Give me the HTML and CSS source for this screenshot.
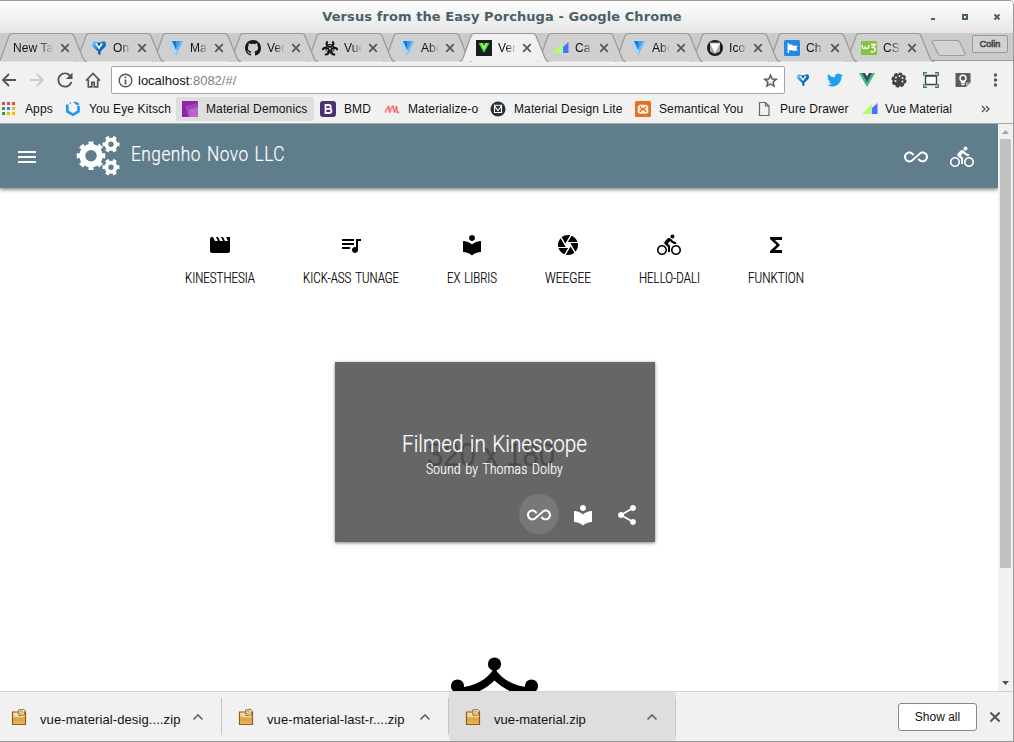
FILE: index.html
```html
<!DOCTYPE html>
<html lang="en">
<head>
<meta charset="utf-8">
<title>Versus from the Easy Porchuga</title>
<link rel="stylesheet" href="styles.css">
</head>
<body>
<svg class="defs" width="0" height="0">
  <defs>
    <linearGradient id="blue" x1="0" y1="0" x2="1" y2="1"><stop offset="0" stop-color="#8fdcff"/><stop offset=".45" stop-color="#1680d8"/><stop offset="1" stop-color="#08306c"/></linearGradient>
    <linearGradient id="box" x1="0" y1="0" x2="0" y2="1"><stop offset="0" stop-color="#f2d49c"/><stop offset=".6" stop-color="#dda347"/><stop offset="1" stop-color="#e8b867"/></linearGradient>
  </defs>
  <symbol id="tab" viewBox="0 0 92 29"><path d="M0 28.5C2 28 2 27 3 25L11 3Q12 .5 14 .5H73Q75 .5 76 3L85 25Q86.500 28.500 89 28.500"/></symbol>
  <symbol id="close" viewBox="0 0 10 10"><path d="M1.200 1.200l7.600 7.600M8.800 1.200L1.200 8.800" fill="none" stroke="#555" stroke-width="1.700"/></symbol>
  <symbol id="pin" viewBox="0 0 16 16"><path d="M1 4.500Q1 1 4.500 1.300L8 2.500l3.500-1.200Q15 1 15 4.500q0 2-2 3.500L9.500 11.500V15L7 14V11.500L3 8Q1 6.500 1 4.500z" fill="url(#blue)"/><path d="M5 3.500L8 8l3-4.500" fill="none" stroke="#e9f8ff" stroke-width="1.600"/><path d="M6.500 3h3L8 6z" fill="#0d4d92"/></symbol>
  <symbol id="vuetify" viewBox="0 0 16 16"><path d="M1 1h5l2 15z" fill="#7cc3ff"/><path d="M1 1h4l3 6v8z" fill="#a7dcff"/><path d="M15 1h-5L8 16z" fill="#68b8fb"/><path d="M4 1h8L8 10z" fill="#1875d1"/><path d="M8 1h4L8 10z" fill="#3e9bea"/></symbol>
  <symbol id="github" viewBox="0 0 16 16"><path fill="#191717" d="M8 0C3.580 0 0 3.580 0 8c0 3.540 2.290 6.530 5.470 7.590.4.070.55-.17.55-.38 0-.19-.01-.82-.01-1.490-2.010.370-2.530-.49-2.690-.94-.09-.23-.48-.94-.82-1.130-.28-.15-.68-.52-.01-.53.63-.01 1.080.58 1.230.82.72 1.210 1.870.87 2.330.66.070-.52.280-.87.510-1.070-1.780-.2-3.640-.89-3.640-3.950 0-.87.310-1.590.82-2.150-.08-.2-.36-1.020.08-2.120 0 0 .67-.21 2.200.82.64-.18 1.320-.27 2-.27.68 0 1.360.09 2 .27 1.530-1.040 2.200-.82 2.200-.82.44 1.100.16 1.920.08 2.120.51.56.82 1.270.82 2.150 0 3.070-1.870 3.750-3.650 3.950.29.25.54.73.54 1.480 0 1.070-.01 1.930-.01 2.200 0 .21.15.46.55.38A8 8 0 0 0 16 8c0-4.420-3.580-8-8-8z"/></symbol>
  <symbol id="hazard" viewBox="0 0 16 16"><g fill="none" stroke="#111"><g stroke-width="1.900"><path d="M5.600 1.300A3.300 3.300 0 1 0 10.400 1.300"/><path d="M5.600 1.300A3.300 3.300 0 1 0 10.400 1.300" transform="rotate(120 8 8.600)"/><path d="M5.600 1.300A3.300 3.300 0 1 0 10.400 1.300" transform="rotate(240 8 8.600)"/></g><circle cx="8" cy="8.600" r="4.200" stroke-width="1"/></g><circle cx="8" cy="8.600" r=".9" fill="#d0d0d0"/></symbol>
  <symbol id="vdark" viewBox="0 0 16 16"><path d="M0 0h16v16H0z" fill="#1c1c1c"/><path d="M2.500 3h11L8 13z" fill="#1ae06a"/><path d="M4.500 3h7L8 10z" fill="#c8f53a"/><path d="M6.200 3h3.600L8 6.500z" fill="#1c8a3c"/></symbol>
  <symbol id="vm" viewBox="0 0 16 16"><path d="M0 13L10 3v10z" fill="#b2ff59"/><path d="M8 13V9l4-4v8z" fill="#84ffe0"/><path d="M10 7l5.500-5v11H10z" fill="#536dfe"/></symbol>
  <symbol id="mdl" viewBox="0 0 16 16"><circle cx="8" cy="8" r="8" fill="#1d1d1d"/><path d="M3 2.500h10v9L8 14l-5-2.500z" fill="#aaa"/><path d="M3 3.500h10L8 13z" fill="#fff"/></symbol>
  <symbol id="flag" viewBox="0 0 16 16"><rect width="16" height="16" rx="1.500" fill="#2389e8"/><path d="M4.300 3v10" stroke="#fff" stroke-width="1.400"/><path d="M4.300 4.500H8l1 1.200h4.500l-1 2.500 1 2.500H9L8 10.300H4.300z" fill="#fff"/></symbol>
  <symbol id="wthree" viewBox="0 0 16 16"><path d="M0 1h16v14H0z" fill="#86c440"/><path d="M1.200 5v1.500q0 2 1.500 2t1.500-2q0 2 1.800 2 1.700 0 1.700-2V5M10 4.500h4.200L11.500 7.300q3.200.3 2.700 2.800-.7 2.400-4.700 1.600" fill="none" stroke="#fff" stroke-width="1.300"/></symbol>
  <symbol id="bike" viewBox="0 0 24 24"><path d="M15.500 5.500c1.100 0 2-.9 2-2s-.9-2-2-2-2 .9-2 2 .9 2 2 2zM5 12c-2.800 0-5 2.200-5 5s2.200 5 5 5 5-2.200 5-5-2.200-5-5-5zm0 8.500c-1.900 0-3.500-1.600-3.500-3.500s1.600-3.500 3.500-3.500 3.500 1.600 3.500 3.500-1.600 3.500-3.500 3.500zm5.800-10l2.400-2.400.8.8c1.300 1.300 3 2.100 5.100 2.100V9c-1.500 0-2.700-.6-3.600-1.500l-1.900-1.900c-.5-.4-1-.6-1.600-.6s-1.100.2-1.400.6L7.800 8.400c-.4.4-.6.9-.6 1.400 0 .6.2 1.100.6 1.400L11 14v5h2v-6.200l-2.200-2.300zM19 12c-2.800 0-5 2.200-5 5s2.200 5 5 5 5-2.200 5-5-2.200-5-5-5zm0 8.500c-1.900 0-3.500-1.600-3.500-3.500s1.600-3.500 3.500-3.500 3.500 1.600 3.500 3.500-1.600 3.500-3.500 3.500z"/></symbol>
  <symbol id="infinity" viewBox="0 0 24 24"><path d="M18.600 6.620c-1.440 0-2.800.56-3.770 1.530L12 10.660 10.480 12h.01L7.800 14.390c-.64.64-1.490.99-2.400.99-1.870 0-3.390-1.510-3.390-3.380S3.530 8.620 5.400 8.620c.91 0 1.760.35 2.440 1.030l1.130 1 1.510-1.340L9.220 8.200C8.200 7.180 6.840 6.620 5.400 6.620 2.420 6.620 0 9.040 0 12s2.420 5.380 5.400 5.380c1.440 0 2.800-.56 3.770-1.530l2.830-2.500.01.01L13.520 12h-.01l2.690-2.390c.64-.64 1.490-.99 2.400-.99 1.870 0 3.390 1.510 3.390 3.380s-1.520 3.380-3.390 3.380c-.9 0-1.760-.35-2.440-1.030l-1.140-1.010-1.510 1.340 1.270 1.120c1.020 1.010 2.370 1.570 3.820 1.570 2.980 0 5.400-2.410 5.400-5.380s-2.420-5.370-5.400-5.370z"/></symbol>
  <symbol id="library" viewBox="0 0 24 24"><path d="M12 11.550C9.640 9.350 6.480 8 3 8v11c3.480 0 6.640 1.350 9 3.550 2.360-2.190 5.520-3.550 9-3.550V8c-3.480 0-6.640 1.350-9 3.550zM12 8c1.660 0 3-1.340 3-3s-1.340-3-3-3-3 1.340-3 3 1.340 3 3 3z"/></symbol>
  <symbol id="zip" viewBox="0 0 16 18"><path d="M1.500 4h13v12.500h-13z" fill="url(#box)" stroke="#955c12" stroke-width="1.200"/><path d="M2.500 5h11v4h-11z" fill="#f0d9a8"/><path d="M7.500 2l5-.7 1.700 1.500-1 4.200-5.200.5z" fill="#f4e6c8" stroke="#955c12" stroke-width=".9"/><path d="M8.500 5.800l4-1.300M9 3.800l3-.8" stroke="#b98435" stroke-width=".8" fill="none"/></symbol>
  <symbol id="chev" viewBox="0 0 12 8"><path d="M1.500 6.500L6 2l4.500 4.500" fill="none" stroke="#666" stroke-width="1.700"/></symbol>
</svg>

<div class="window">
  <div class="titlebar">
    <div class="title">Versus from the Easy Porchuga - Google Chrome</div>
    <svg class="wm" width="80" height="14" viewBox="0 0 80 14"><path d="M5 9h4" stroke="#47606b" stroke-width="2"/><path d="M37 5h4v4h-4z" fill="none" stroke="#47606b" stroke-width="2"/><path d="M68.500 4.500l5 5M73.500 4.500l-5 5" stroke="#47606b" stroke-width="2"/></svg>
  </div>

  <div class="tabs">
    <div class="tab z12 blank"><svg class="shape"><use href="#tab"/></svg><span>New Ta</span><svg class="x"><use href="#close"/></svg></div>
    <div class="tab z11"><svg class="shape"><use href="#tab"/></svg><svg class="fav"><use href="#pin"/></svg><span>On</span><svg class="x"><use href="#close"/></svg></div>
    <div class="tab z10"><svg class="shape"><use href="#tab"/></svg><svg class="fav"><use href="#vuetify"/></svg><span>Ma</span><svg class="x"><use href="#close"/></svg></div>
    <div class="tab z9"><svg class="shape"><use href="#tab"/></svg><svg class="fav"><use href="#github"/></svg><span>Ver</span><svg class="x"><use href="#close"/></svg></div>
    <div class="tab z8"><svg class="shape"><use href="#tab"/></svg><svg class="fav"><use href="#hazard"/></svg><span>Vue</span><svg class="x"><use href="#close"/></svg></div>
    <div class="tab z7"><svg class="shape"><use href="#tab"/></svg><svg class="fav"><use href="#vuetify"/></svg><span>Abo</span><svg class="x"><use href="#close"/></svg></div>
    <div class="tab active"><svg class="shape"><use href="#tab"/></svg><svg class="fav"><use href="#vdark"/></svg><span>Ver</span><svg class="x"><use href="#close"/></svg></div>
    <div class="tab z6"><svg class="shape"><use href="#tab"/></svg><svg class="fav"><use href="#vm"/></svg><span>Ca</span><svg class="x"><use href="#close"/></svg></div>
    <div class="tab z5"><svg class="shape"><use href="#tab"/></svg><svg class="fav"><use href="#vuetify"/></svg><span>Abo</span><svg class="x"><use href="#close"/></svg></div>
    <div class="tab z4"><svg class="shape"><use href="#tab"/></svg><svg class="fav"><use href="#mdl"/></svg><span>Ico</span><svg class="x"><use href="#close"/></svg></div>
    <div class="tab z3"><svg class="shape"><use href="#tab"/></svg><svg class="fav"><use href="#flag"/></svg><span>Ch</span><svg class="x"><use href="#close"/></svg></div>
    <div class="tab z2"><svg class="shape"><use href="#tab"/></svg><svg class="fav"><use href="#wthree"/></svg><span>CSS</span><svg class="x"><use href="#close"/></svg></div>
    <svg class="newtab" width="36" height="18" viewBox="0 0 36 18"><path d="M3 1.500h23q2 0 3 2l5 11q.5 2-1.500 2H10q-2 0-3-2L1.500 3.500q-.5-2 1.500-2z" fill="#d3d3d3" stroke="#9d9d9d" stroke-width="1.200"/></svg>
    <div class="user">Colin</div>
  </div>

  <div class="toolbar">
    <div class="navs">
      <svg viewBox="0 0 16 16"><path d="M15 8H2M8 2L2 8l6 6" fill="none" stroke="#555" stroke-width="1.900"/></svg>
      <svg viewBox="0 0 16 16"><path d="M1 8h13M8 2l6 6-6 6" fill="none" stroke="#ccc" stroke-width="1.900"/></svg>
      <svg viewBox="3.500 3.500 17 17"><path fill="#555" d="M17.650 6.350C16.200 4.900 14.210 4 12 4c-4.420 0-7.990 3.580-7.990 8s3.570 8 7.990 8c3.730 0 6.840-2.550 7.730-6h-2.080c-.82 2.330-3.040 4-5.650 4-3.310 0-6-2.690-6-6s2.690-6 6-6c1.660 0 3.140.69 4.220 1.780L13 11h7V4l-2.350 2.350z"/></svg>
      <svg viewBox="0 0 16 16"><path d="M1 8.700L8 1.500l7 7.200M3.300 7.500v7.300h3.500v-4.500h2.400v4.500h3.500V7.500" fill="none" stroke="#555" stroke-width="1.700"/></svg>
    </div>
    <div class="omni">
      <svg width="15" height="15" viewBox="0 0 15 15"><circle cx="7.500" cy="7.500" r="6.300" fill="none" stroke="#555" stroke-width="1.400"/><path d="M7.500 3.500v1.800M7.500 6.500v5" stroke="#555" stroke-width="1.700"/></svg>
      <div class="url">localhost<span>:8082/#/</span></div>
      <svg width="15" height="15" viewBox="1.500 1 21 21"><path fill="#555" stroke="#555" stroke-width=".5" d="M22 9.240l-7.190-.62L12 2 9.190 8.630 2 9.240l5.460 4.730L5.820 21 12 17.270 18.180 21l-1.630-7.030L22 9.240zM12 15.400l-3.760 2.270 1-4.280-3.320-2.880 4.380-.38L12 6.100l1.710 4.040 4.380.38-3.320 2.880 1 4.280L12 15.400z"/></svg>
    </div>
    <div class="exts">
      <svg viewBox="0 0 16 16"><path d="M1 3Q2 0 8 .5 14 0 15 3q1 3-5 12H6.500Q0 6 1 3z" fill="#fff" stroke="#ddd" stroke-width=".5"/><use href="#pin" x="1" y="1" width="14" height="14"/></svg>
      <svg viewBox="0 0 24 24"><path fill="#1da1f2" d="M23.953 4.570a10 10 0 0 1-2.825.775 4.958 4.958 0 0 0 2.163-2.723c-.951.555-2.005.959-3.127 1.184a4.920 4.920 0 0 0-8.384 4.482C7.690 8.095 4.067 6.130 1.640 3.162a4.822 4.822 0 0 0-.666 2.475c0 1.710.87 3.213 2.188 4.096a4.904 4.904 0 0 1-2.228-.616v.06a4.923 4.923 0 0 0 3.946 4.827 4.996 4.996 0 0 1-2.212.085 4.936 4.936 0 0 0 4.604 3.417 9.867 9.867 0 0 1-6.102 2.105c-.39 0-.779-.023-1.170-.067a13.995 13.995 0 0 0 7.557 2.209c9.053 0 13.998-7.496 13.998-13.985 0-.21 0-.42-.015-.63A9.935 9.935 0 0 0 24 4.590z"/></svg>
      <svg viewBox="0 0 16 16"><path d="M0 1h16L8 15z" fill="#41b883"/><path d="M3 1h10L8 10z" fill="#34495e"/><path d="M6 1h4L8 4.500z" fill="#f1f1f1"/></svg>
      <svg viewBox="0 0 16 16"><circle cx="8" cy="8" r="6.600" fill="#444"/><circle cx="8" cy="8" r="6.800" fill="none" stroke="#444" stroke-width="1.500" stroke-dasharray="3.300 2"/><g fill="#f1f1f1"><circle cx="5" cy="5.500" r="1"/><circle cx="8.500" cy="4" r="1"/><circle cx="11.500" cy="6" r="1"/><circle cx="4.500" cy="9" r="1"/><circle cx="11.500" cy="9.500" r="1"/></g></svg>
      <svg viewBox="0 0 16 16"><path d="M.7 4V.7H4M12 .7h3.300V4M15.300 12v3.300H12M4 15.300H.7V12" fill="none" stroke="#3c8a35" stroke-width="1.400"/><path d="M2.500 3.500h11v9h-11z" fill="#fff" stroke="#444" stroke-width="1.400"/><path d="M2 3.800h12" stroke="#444" stroke-width="1.800"/></svg>
      <svg viewBox="0 0 16 16"><path d="M.5 1h15v9.500L11 15H.5z" fill="#5b5b5b"/><path d="M15.500 10.500H11V15z" fill="#aaa"/><circle cx="8" cy="6.300" r="3" fill="none" stroke="#fff" stroke-width="1.400"/><path d="M6.500 9v1.500h3V9M6.500 12.500h3" fill="none" stroke="#fff" stroke-width="1.300"/></svg>
      <svg viewBox="0 0 16 16"><g fill="#555"><circle cx="8.500" cy="3" r="1.700"/><circle cx="8.500" cy="8" r="1.700"/><circle cx="8.500" cy="13" r="1.700"/></g></svg>
    </div>
  </div>

  <div class="bookmarks">
    <div class="bm apps"><svg viewBox="0 0 16 16"><path d="M1 1h3v3H1zM6 1h3v3H6zM11 1h3v3h-3z" fill="#e8453c"/><path d="M1 6h3v3H1z" fill="#2f9e58"/><path d="M6 6h3v3H6z" fill="#3b7de0"/><path d="M11 6h3v3h-3z" fill="#f4b400"/><path d="M1 11h3v3H1z" fill="#2f9e58"/><path d="M6 11h3v3H6zM11 11h3v3h-3z" fill="#f4b400"/></svg><span>Apps</span></div>
    <div class="bm"><svg viewBox="0 0 16 16"><path d="M2.300 3.500v7L8 13.800l5.500-3.300V5" fill="none" stroke="#2196f3" stroke-width="2.700"/><path d="M4.500 1.800l1.500-.8v2.500zM8 1l3-.3L14.800 3l-2.500 1.500z" fill="#2196f3"/></svg><span>You Eye Kitsch</span></div>
    <div class="bm hot"><svg viewBox="0 0 16 16"><path d="M0 0h16v16H0z" fill="#8e24aa"/><path d="M3 5L16 2v14H6z" fill="#a043b6"/><path d="M6 9l10-3v10H8z" fill="#b566c7"/></svg><span>Material Demonics</span></div>
    <div class="bm"><svg viewBox="0 0 16 16"><rect width="16" height="16" rx="3" fill="#49306f"/><path d="M5.500 4h3.200q2.100.1 2.100 1.900 0 2-2.100 2H5.500h3.700q2.300.1 2.300 2.100T9 12H5.500z" fill="none" stroke="#fff" stroke-width="1.800"/></svg><span>BMD</span></div>
    <div class="bm"><svg viewBox="0 0 16 16"><path d="M1 11.500L4.500 5M5.500 11.500L8.700 4.500M10.500 11.500L12.500 5" fill="none" stroke="#ff8e95" stroke-width="2"/><path d="M4.500 5l1.200 6.500M8.700 4.500l2 7M12.500 5l.8 6.500h2" fill="none" stroke="#ee6e73" stroke-width="1.600"/></svg><span>Materialize-o</span></div>
    <div class="bm"><svg viewBox="0 0 16 16"><circle cx="8" cy="8" r="7.500" fill="#263238"/><path d="M4.500 11.500V4.800L8 9.500l3.500-4.700v6.700z" fill="none" stroke="#fff" stroke-width="1.100"/><path d="M4 4.300h8" stroke="#fff"/></svg><span>Material Design Lite</span></div>
    <div class="bm"><svg viewBox="0 0 16 16"><rect width="16" height="16" rx="1.500" fill="#e8701b"/><path d="M7 6V4.500H5L3.500 6v1L5 8 3.500 9.300v1.500L5 12h2v-1.700h2V12h2l1.500-1.200V9.300L11 8l1.500-1V6L11 4.500H9V6z" fill="none" stroke="#fff" stroke-width="1.700"/></svg><span>Semantical You</span></div>
    <div class="bm"><svg viewBox="0 0 16 16"><path d="M3.500 1.500h6L13 5v9.500H3.500zM9.500 1.500V5H13" fill="none" stroke="#666" stroke-width="1.200"/></svg><span>Pure Drawer</span></div>
    <div class="bm last"><svg viewBox="0 0 16 16"><use href="#vm"/></svg><span>Vue Material</span></div>
    <svg class="more" width="10" height="8" viewBox="0 0 10 8"><path d="M1 1l3 3-3 3M5 1l3 3-3 3" fill="none" stroke="#555" stroke-width="1.300"/></svg>
  </div>

  <div class="viewport">
    <div class="page">
      <header class="appbar">
        <svg class="ico menu" viewBox="0 0 24 24"><path d="M3 18h18v-2H3v2zm0-5h18v-2H3v2zm0-7v2h18V6H3z"/></svg>
        <svg class="gears" width="46" height="42" viewBox="0 0 46 42" fill="none" stroke="#fff">
          <circle cx="15" cy="20.700" r="8.700" stroke-width="5.900"/><circle cx="15" cy="20.700" r="12" stroke-width="4.600" pathLength="80" stroke-dasharray="5 5" stroke-dashoffset="2.500"/>
          <circle cx="35" cy="9.300" r="4.600" stroke-width="3.800"/><circle cx="35" cy="9.300" r="7" stroke-width="3" pathLength="60" stroke-dasharray="5 5" stroke-dashoffset="2.500"/>
          <circle cx="35" cy="32.200" r="4.600" stroke-width="3.800"/><circle cx="35" cy="32.200" r="7" stroke-width="3" pathLength="60" stroke-dasharray="5 5" stroke-dashoffset="2.500"/>
        </svg>
        <svg class="brand" width="160" height="30"><text x="1" y="22" textLength="154" lengthAdjust="spacingAndGlyphs">Engenho Novo LLC</text></svg>
        <div class="actions"><svg class="ico"><use href="#infinity"/></svg><svg class="ico"><use href="#bike"/></svg></div>
      </header>

      <nav class="menu-row">
        <a><svg class="ico" viewBox="0 0 24 24"><path d="M18 4l2 4h-3l-2-4h-2l2 4h-3l-2-4H8l2 4H7L5 4H4c-1.100 0-1.990.9-1.990 2L2 18c0 1.100.9 2 2 2h16c1.100 0 2-.9 2-2V4h-4z"/></svg><svg class="label" width="70" height="20"><text y="14" textLength="70" lengthAdjust="spacingAndGlyphs">KINESTHESIA</text></svg></a>
        <a><svg class="ico" viewBox="0 0 24 24"><path d="M15 6H3v2h12V6zm0 4H3v2h12v-2zM3 16h8v-2H3v2zM17 6v8.180c-.31-.11-.65-.18-1-.18-1.660 0-3 1.340-3 3s1.340 3 3 3 3-1.340 3-3V8h3V6h-5z"/></svg><svg class="label" width="96" height="20"><text y="14" textLength="96" lengthAdjust="spacingAndGlyphs">KICK-ASS TUNAGE</text></svg></a>
        <a><svg class="ico"><use href="#library"/></svg><svg class="label" width="50" height="20"><text y="14" textLength="50" lengthAdjust="spacingAndGlyphs">EX LIBRIS</text></svg></a>
        <a><svg class="ico" viewBox="0 0 24 24"><path d="M9.400 10.500l4.770-8.260C13.470 2.090 12.750 2 12 2c-2.400 0-4.600.85-6.320 2.250l3.660 6.350.06-.1zM21.540 9c-.92-2.920-3.150-5.260-6-6.340L11.880 9h9.660zm.26 1h-7.490l.29.5 4.760 8.250C21 16.970 22 14.610 22 12c0-.69-.07-1.350-.2-2zM8.540 12l-3.900-6.750C3.010 7.030 2 9.390 2 12c0 .69.07 1.350.2 2h7.490l-1.150-2zm-6.080 3c.92 2.920 3.150 5.260 6 6.340L12.120 15H2.460zm11.270 0l-3.900 6.760c.7.150 1.420.24 2.170.24 2.400 0 4.600-.85 6.320-2.250l-3.660-6.350-.93 1.600z"/></svg><svg class="label" width="46" height="20"><text y="14" textLength="46" lengthAdjust="spacingAndGlyphs">WEEGEE</text></svg></a>
        <a><svg class="ico nudge"><use href="#bike"/></svg><svg class="label" width="61" height="20"><text y="14" textLength="61" lengthAdjust="spacingAndGlyphs">HELLO-DALI</text></svg></a>
        <a><svg class="ico" viewBox="0 0 24 24"><path d="M18 4H6v2l6.500 6L6 18v2h12v-3h-7l5-5-5-5h7z"/></svg><svg class="label" width="56" height="20"><text y="14" textLength="56" lengthAdjust="spacingAndGlyphs">FUNKTION</text></svg></a>
      </nav>

      <section class="card">
        <svg class="cover" width="320" height="128"><text class="size" x="92" y="104" textLength="128" lengthAdjust="spacingAndGlyphs">320 x 180</text><text class="head" x="67" y="90" textLength="185" lengthAdjust="spacingAndGlyphs">Filmed in Kinescope</text><text class="sub" x="91" y="112" textLength="137" lengthAdjust="spacingAndGlyphs">Sound by Thomas Dolby</text></svg>
        <div class="card-actions">
          <b class="round on"><svg class="ico"><use href="#infinity"/></svg></b>
          <b class="round"><svg class="ico"><use href="#library"/></svg></b>
          <b class="round"><svg class="ico" viewBox="0 0 24 24"><path d="M18 16.080c-.76 0-1.440.3-1.960.77L8.910 12.700c.05-.23.09-.46.09-.7s-.04-.47-.09-.7l7.050-4.110c.54.5 1.250.81 2.040.81 1.660 0 3-1.340 3-3s-1.340-3-3-3-3 1.340-3 3c0 .24.04.47.09.7L8.040 9.810C7.500 9.310 6.790 9 6 9c-1.660 0-3 1.340-3 3s1.340 3 3 3c.79 0 1.500-.31 2.040-.81l7.120 4.160c-.05.21-.08.43-.08.65 0 1.610 1.310 2.920 2.920 2.920 1.610 0 2.920-1.310 2.920-2.920s-1.310-2.920-2.920-2.920z"/></svg></b>
        </div>
      </section>

      <svg class="crown" width="92" height="36" viewBox="0 0 92 36"><circle cx="46.500" cy="7" r="6.600"/><circle cx="9.500" cy="29" r="6.600"/><circle cx="83.500" cy="29" r="6.600"/><path d="M46 11.500C39 23 27 29 10 31v5h17c8-3 14-7 19.500-12.500C52 29 59 33 66 36h17v-5C66 29 54 23 47 11.500z"/></svg>
    </div>
    <div class="scroll">
      <svg width="15" height="15" viewBox="0 0 15 15"><path d="M4 10h7L7.500 6z" fill="#a3a3a3"/></svg>
      <div class="thumb"></div>
      <svg width="15" height="15" viewBox="0 0 15 15"><path d="M4 5h7L7.500 9z" fill="#505050"/></svg>
    </div>
  </div>

  <div class="shelf">
    <div class="dl first"><svg class="zip"><use href="#zip"/></svg><span>vue-material-desig....zip</span><svg class="chev"><use href="#chev"/></svg></div>
    <div class="dl"><svg class="zip"><use href="#zip"/></svg><span>vue-material-last-r....zip</span><svg class="chev"><use href="#chev"/></svg></div>
    <div class="dl hover"><svg class="zip"><use href="#zip"/></svg><span>vue-material.zip</span><svg class="chev"><use href="#chev"/></svg></div>
    <div class="showall">Show all</div>
    <svg class="shut" width="12" height="12"><use href="#close"/></svg>
  </div>
</div>
</body>
</html>
```
FILE: styles.css
```css
* { box-sizing: border-box; }
body { margin: 0; font-family: "Liberation Sans", Arial, sans-serif; font-size: 12px; color: #111; }
.defs { position: absolute; }
svg { display: block; flex: none; }
.window { width: 1014px; height: 742px; display: flex; flex-direction: column; border: solid #999; border-width: 1px 1px 1px 0; border-radius: 0 5px 0 0; overflow: hidden; background: #f1f1f1; }

.titlebar { height: 32px; flex: none; display: grid; grid-template-columns: 1fr 80px; align-items: center; padding-right: 7px; background: linear-gradient(#fdfdfd, #e6e6e6); }
.title { font: bold 13px "DejaVu Sans", sans-serif; letter-spacing: .08px; color: #47606b; text-align: center; padding: 0 0 1px 78px; white-space: nowrap; }

.tabs { height: 28px; flex: none; display: flex; position: relative; background: #cacaca; border-bottom: 1px solid #9b9b9b; }
.tab { width: 77px; flex: none; height: 29px; position: relative; display: flex; align-items: center; padding-left: 14px; }
.tab .shape { position: absolute; left: -2px; top: 0; width: 92px; height: 29px; fill: #d0d0d0; stroke: #999; stroke-width: 1.2; }
.tab .fav { position: relative; width: 16px; height: 16px; }
.tab span { position: relative; width: 18px; margin-left: 6px; overflow: hidden; white-space: nowrap; letter-spacing: .1px; -webkit-mask-image: linear-gradient(90deg, #000 45%, transparent); mask-image: linear-gradient(90deg, #000 45%, transparent); }
.tab.blank { padding-left: 13px; }
.tab.blank span { width: 41px; margin-left: 0; -webkit-mask-image: linear-gradient(90deg, #000 60%, transparent); mask-image: linear-gradient(90deg, #000 60%, transparent); }
.tab .x { position: relative; width: 10px; height: 10px; margin-left: 6px; }
.z12 { z-index: 12; } .z11 { z-index: 11; } .z10 { z-index: 10; } .z9 { z-index: 9; } .z8 { z-index: 8; } .z7 { z-index: 7; }
.z6 { z-index: 6; } .z5 { z-index: 5; } .z4 { z-index: 4; } .z3 { z-index: 3; } .z2 { z-index: 2; }
.tab.active { z-index: 20; }
.tab.active .shape { fill: #f1f1f1; }
.newtab { margin: 6px 0 0 7px; }
.user { width: 36px; height: 18px; margin: 2px 0 0 5px; border: 1px solid #999; border-radius: 2px; background: #d2d2d2; font-size: 9px; line-height: 16px; text-align: center; color: #bbb; -webkit-text-stroke: .7px #444; }

.toolbar { height: 33px; flex: none; display: flex; align-items: flex-start; padding-top: 5px; }
.navs { width: 111px; height: 28px; display: flex; align-items: center; gap: 12px; padding-left: 1px; }
.navs svg { width: 16px; height: 16px; }
.omni { width: 674px; height: 28px; display: flex; align-items: center; padding: 0 6px 0 6px; border: 1px solid #a6a6a6; border-radius: 2px; background: #fff; }
.url { flex: 1; margin-left: 5px; font-size: 13px; }
.url span { color: #808080; }
.exts { display: flex; gap: 16px; height: 28px; align-items: center; padding-left: 10px; }
.exts svg { width: 16px; height: 16px; }

.bookmarks { height: 30px; flex: none; display: grid; grid-template-columns: 64px 117px 138px 64px 106px 145px 121px 106px 119px 12px; align-items: center; padding-left: 1px; border-bottom: 1px solid #a9a9a9; }
.bm { height: 24px; display: flex; align-items: center; gap: 8px; white-space: nowrap; letter-spacing: .12px; }
.bm.last { letter-spacing: 0; gap: 7px; }
.bm svg { width: 16px; height: 16px; }
.bm.hot { margin: 0 6px 0 -6px; width: 138px; padding-left: 6px; background: #dedede; border-radius: 2px; }

.viewport { height: 567px; flex: none; display: flex; }
.page { width: 998px; height: 567px; background: #fff; overflow: hidden; display: flex; flex-direction: column; align-items: center; }
.ico { width: 24px; height: 24px; fill: currentColor; }
text { font-family: Roboto, sans-serif; font-weight: 300; fill: currentColor; stroke: currentColor; stroke-width: .2px; word-spacing: 1.5px; }
.appbar { width: 998px; height: 64px; flex: none; display: flex; align-items: center; padding: 2px 24px 0 15px; background: #607d8b; color: #fff; box-shadow: 0 2px 4px rgba(0,0,0,.35), 0 1px 3px rgba(0,0,0,.2); }
.gears { margin: -3px 0 0 37px; }
.brand { margin: -7px 0 0 8px; font-size: 21px; letter-spacing: .6px; }
.actions { margin-left: auto; display: flex; gap: 22px; }
.menu-row { display: flex; gap: 48px; height: 60px; flex: none; margin: 45px 9px 0 0; color: #000; }
.menu-row a { display: flex; flex-direction: column; align-items: center; gap: 12px; }
.nudge { margin-right: 1px; }
.label { font-size: 14px; overflow: visible; }
.card { width: 320px; height: 180px; flex: none; margin: 69px 8px 0 0; background: #666; color: #fff; box-shadow: 0 1px 4px rgba(0,0,0,.35), 0 1px 2px rgba(0,0,0,.2); }
.head { font-size: 24.5px; }
.sub { font-size: 14px; letter-spacing: .4px; }
.size { font-family: "Liberation Sans", Arial, sans-serif; font-size: 34px; font-weight: 400; fill: #4b4b4b; stroke: none; word-spacing: 0; }
.card-actions { display: flex; justify-content: flex-end; gap: 4px; padding: 4px 8px 0 0; }
.round { width: 40px; height: 40px; padding-top: 2px; border-radius: 50%; display: flex; align-items: center; justify-content: center; }
.round.on { background: #787878; }
.crown { margin: 115px 11px 0 0; }
.scroll { width: 15px; background: #f1f1f1; }
.thumb { height: 429px; margin: 0 2px 108px; background: #c1c1c1; }

.shelf { flex: 1; display: flex; align-items: center; border-top: 1px solid #d2d2d2; background: #f1f1f1; }
.dl { width: 227px; height: 49px; position: relative; display: flex; align-items: center; padding: 0 18px 0 16px; font-size: 13px; letter-spacing: .1px; white-space: nowrap; background: linear-gradient(#c4c4c4, #c4c4c4) right center / 1px 37px no-repeat; }
.dl.first { width: 222px; padding-left: 11px; }
.dl span { flex: 1; margin: 6px 0 0 13px; }
.dl.hover { background-color: #dedede; border-radius: 3px; letter-spacing: 0; }
.zip { width: 16px; height: 18px; }
.chev { width: 12px; height: 8px; }
.showall { width: 79px; height: 28px; margin-left: 222px; border: 1px solid #888; border-radius: 3px; background: #fff; line-height: 26px; text-align: center; }
.shut { margin-left: 12px; }
```
